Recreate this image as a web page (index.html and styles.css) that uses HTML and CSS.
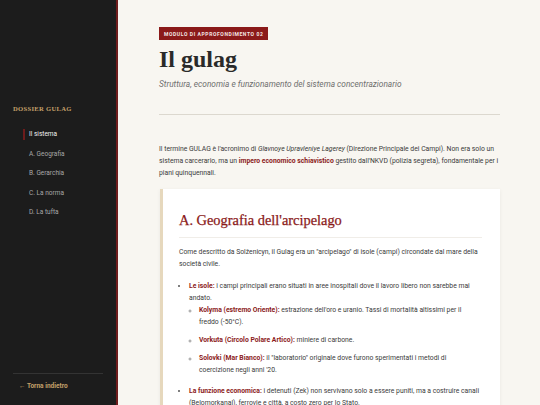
FILE: index.html
```html
<!DOCTYPE html>
<html lang="it">
<head>
<meta charset="utf-8">
<title>Il gulag</title>
<link rel="stylesheet" href="styles.css">
</head>
<body>
<div class="page">
  <aside class="sidebar">
    <div class="side-top">
      <div class="brand">DOSSIER GULAG</div>
      <nav class="nav">
        <a class="nav-item active">Il sistema</a>
        <a class="nav-item">A. Geografia</a>
        <a class="nav-item">B. Gerarchia</a>
        <a class="nav-item">C. La norma</a>
        <a class="nav-item">D. La tufta</a>
      </nav>
    </div>
    <div class="side-bottom">
      <a class="back">← Torna indietro</a>
    </div>
  </aside>
  <main class="main">
    <span class="badge">MODULO DI APPROFONDIMENTO 02</span>
    <h1 class="title">Il gulag</h1>
    <p class="subtitle">Struttura, economia e funzionamento del sistema concentrazionario</p>
    <hr class="rule">
    <p class="intro">Il termine GULAG è l'acronimo di <em>Glavnoye Upravleniye Lagerey</em> (Direzione Principale dei Campi). Non era solo un sistema carcerario, ma un <strong>impero economico schiavistico</strong> gestito dall'NKVD (polizia segreta), fondamentale per i piani quinquennali.</p>
    <section class="card">
      <h2 class="card-title">A. Geografia dell'arcipelago</h2>
      <p class="card-text">Come descritto da Solženicyn, il Gulag era un "arcipelago" di isole (campi) circondate dal mare della società civile.</p>
      <ul class="list">
        <li><strong>Le isole:</strong> i campi principali erano situati in aree inospitali dove il lavoro libero non sarebbe mai andato.
          <ul class="sublist">
            <li><strong>Kolyma (estremo Oriente):</strong> estrazione dell'oro e uranio. Tassi di mortalità altissimi per il freddo (-50°C).</li>
            <li><strong>Vorkuta (Circolo Polare Artico):</strong> miniere di carbone.</li>
            <li><strong>Solovki (Mar Bianco):</strong> il "laboratorio" originale dove furono sperimentati i metodi di coercizione negli anni '20.</li>
          </ul>
        </li>
        <li><strong>La funzione economica:</strong> i detenuti (Zek) non servivano solo a essere puniti, ma a costruire canali (Belomorkanal), ferrovie e città, a costo zero per lo Stato.</li>
      </ul>
    </section>
  </main>
</div>
</body>
</html>
```
FILE: styles.css
```css
* { box-sizing: border-box; }
html, body { margin: 0; padding: 0; }
body {
  width: 540px;
  height: 405px;
  overflow: hidden;
  background: #f8f6f1;
  font-family: Roboto, "Liberation Sans", sans-serif;
  color: #3a3a3a;
}
.page {
  display: flex;
  height: 405px;
}
.sidebar {
  width: 118px;
  flex: none;
  background: #1c1c1c;
  border-right: 2px solid #6e1c1c;
  display: flex;
  flex-direction: column;
  justify-content: space-between;
  padding: 104px 13px 14px 13px;
}
.brand {
  font-family: "Liberation Serif", serif;
  font-weight: bold;
  font-size: 6.6px;
  line-height: 9px;
  letter-spacing: 0.3px;
  color: #c4a06a;
  margin-bottom: 16px;
}
.nav {
  display: flex;
  flex-direction: column;
  gap: 8.5px;
  padding-left: 10px;
}
.nav-item {
  font-size: 6.5px;
  line-height: 11px;
  color: #a8a8a8;
  padding-left: 4px;
  border-left: 2px solid transparent;
}
.nav-item.active {
  color: #f2f2f2;
  border-left-color: #6e1c1c;
}
.side-bottom {
  border-top: 1px solid #333;
  padding-top: 7px;
  padding-left: 6px;
  font-size: 6.5px;
  line-height: 10px;
}
.back {
  font-weight: bold;
  color: #c4a06a;
}
.main {
  flex: 1;
  padding: 27px 40px 0 41px;
  min-width: 0;
  display: flex;
  flex-direction: column;
  align-items: stretch;
}
.badge {
  align-self: flex-start;
  background: #8b1a1a;
  color: #f3e6e6;
  font-size: 5px;
  font-weight: bold;
  letter-spacing: 0.6px;
  padding: 4px 5px 3px 5px;
  line-height: 6px;
}
.title {
  font-family: "Liberation Serif", serif;
  font-weight: bold;
  font-size: 24px;
  line-height: 28px;
  color: #2a2a2a;
  margin: 5px 0 6px 0;
}
.subtitle {
  font-style: italic;
  font-size: 8.3px;
  line-height: 11px;
  color: #6e6e6e;
  margin: 0 0 24px 0;
}
.rule {
  width: 100%;
  border: 0;
  border-top: 1px solid #dcd8cf;
  margin: 0 0 28px 0;
}
.intro {
  font-size: 6.8px;
  line-height: 12px;
  margin: 0 0 10px 0;
}
.intro strong, .list strong {
  color: #8b1a1a;
  font-weight: bold;
}
.card {
  background: #fff;
  border-left: 3px solid #e6d8bd;
  box-shadow: 0 1px 4px rgba(0,0,0,0.06);
  padding: 22px 18px 20px 16px;
  margin-left: 1px;
}
.card-title {
  font-family: "Liberation Serif", serif;
  font-weight: normal;
  font-size: 14.4px;
  line-height: 18px;
  color: #8b1a1a;
  -webkit-text-stroke: 0.25px #8b1a1a;
  margin: 0;
  padding-bottom: 8px;
  border-bottom: 1px solid #f0ede8;
}
.card-text {
  font-size: 6.8px;
  line-height: 12px;
  margin: 8px 0 10px 0;
}
.list {
  font-size: 6.8px;
  line-height: 12px;
  margin: 0;
  padding-left: 10px;
}
.list > li { margin-bottom: 9px; }
.list li::marker { color: #555; font-size: 6px; }
.sublist {
  list-style: circle;
  margin: 0;
  padding-left: 10px;
}
.sublist li { margin-bottom: 6px; }
.sublist li::marker { color: #999; font-size: 5px; }
```
